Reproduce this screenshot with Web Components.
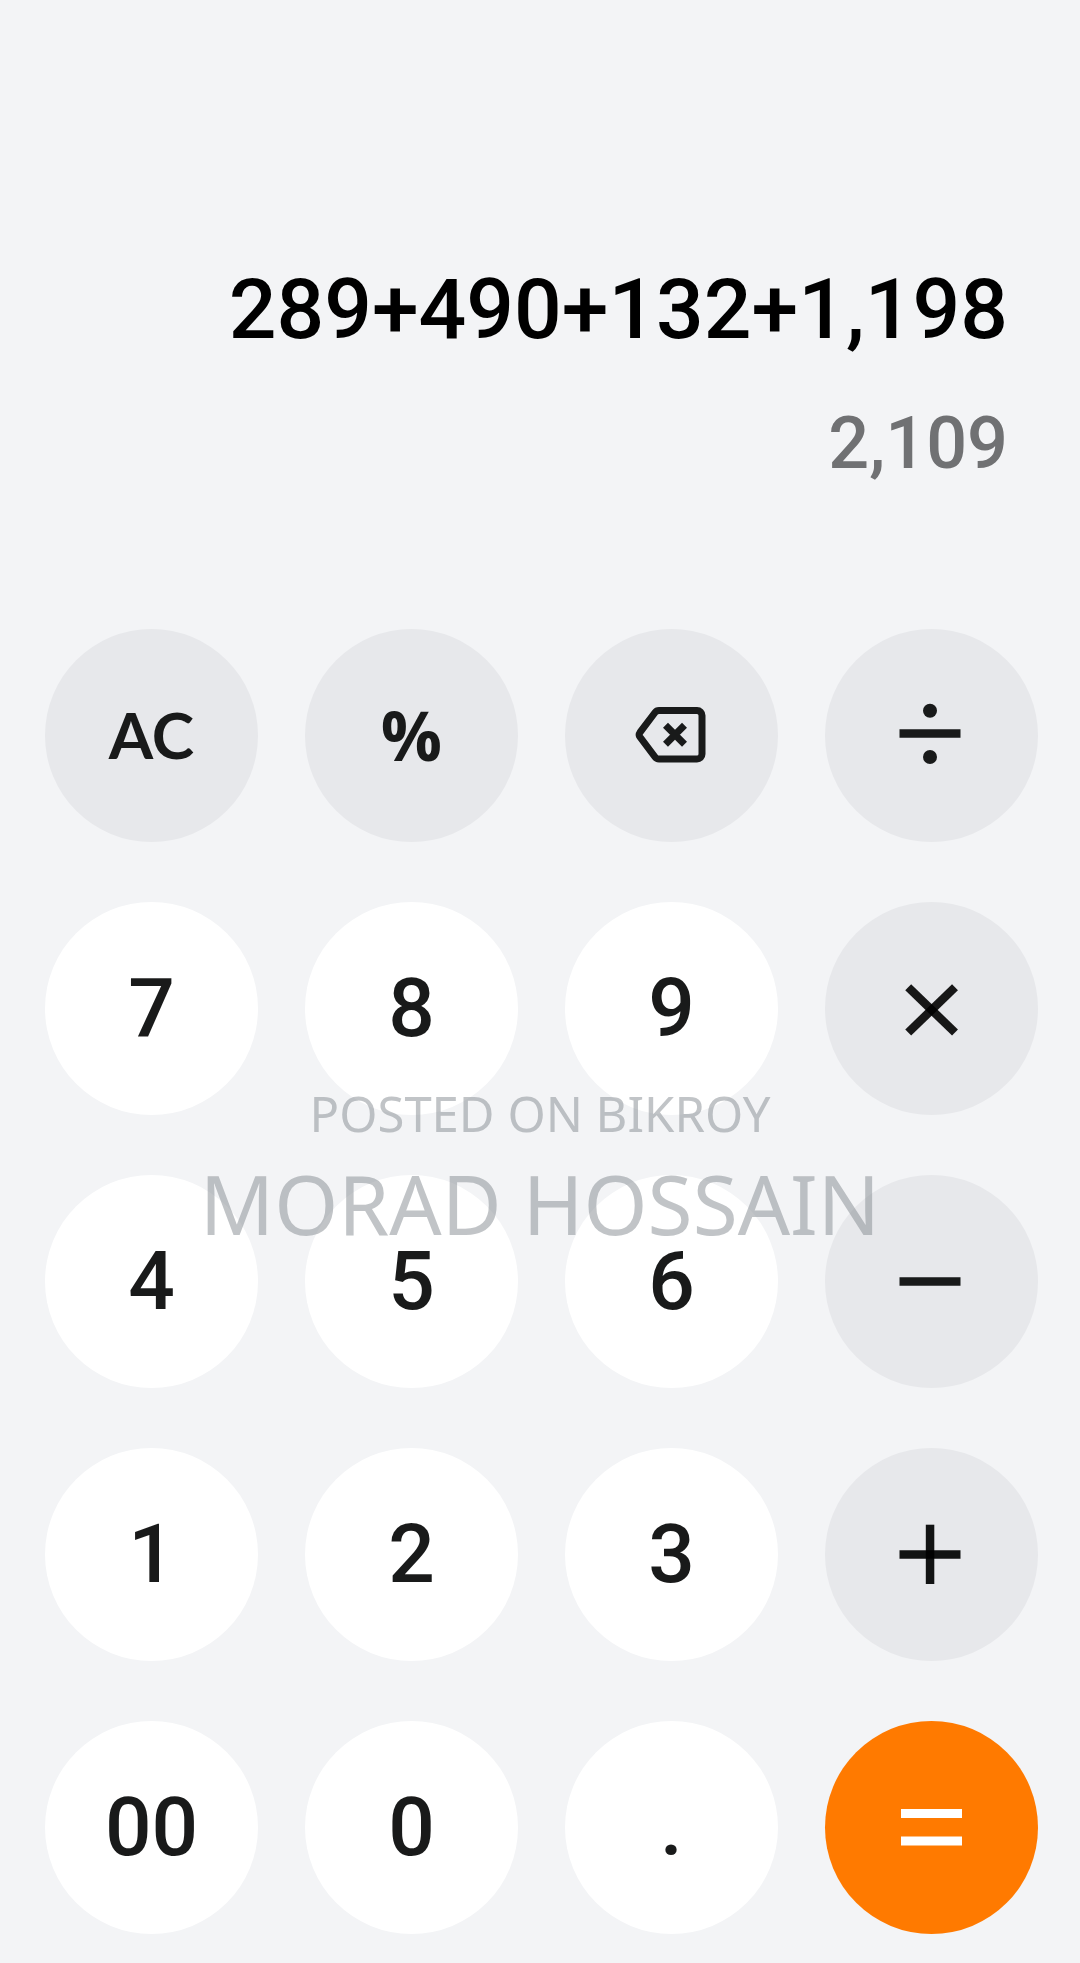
<!DOCTYPE html>
<html lang="en">
<head>
<meta charset="utf-8">
<meta name="viewport" content="width=device-width, initial-scale=1">
<title>Calculator</title>
<style>
body{
    margin: 0;
    background: #F3F4F6;
    font-family: Roboto, sans-serif;
}
</style>
</head>
<body>
<calc-app>
    <calc-display slot="display" data-expression="289+490+132+1,198" data-result="2,109"></calc-display>

    <calc-key data-kind="word">AC</calc-key>
    <calc-key data-kind="percent">%</calc-key>
    <calc-key data-icon="backspace" data-label="Backspace"></calc-key>
    <calc-key data-icon="divide" data-label="Divide"></calc-key>

    <calc-key>7</calc-key>
    <calc-key>8</calc-key>
    <calc-key>9</calc-key>
    <calc-key data-icon="multiply" data-label="Multiply"></calc-key>

    <calc-key>4</calc-key>
    <calc-key>5</calc-key>
    <calc-key>6</calc-key>
    <calc-key data-icon="minus" data-label="Minus"></calc-key>

    <calc-key>1</calc-key>
    <calc-key>2</calc-key>
    <calc-key>3</calc-key>
    <calc-key data-icon="plus" data-label="Plus"></calc-key>

    <calc-key>00</calc-key>
    <calc-key>0</calc-key>
    <calc-key>.</calc-key>
    <calc-key data-icon="equals" data-label="Equals"></calc-key>

    <post-mark slot="mark">
        <span slot="site">POSTED ON BIKROY</span>
        <span slot="owner">MORAD HOSSAIN</span>
    </post-mark>
</calc-app>

<script>
const makeTemplate = (html) => {
    const template = document.createElement("template");
    template.innerHTML = html;
    return template;
};

const appTemplate = makeTemplate(`
<style>
:host{
    display: block;
    position: relative;
}

.keys{
    display: grid;
    grid-template-columns: repeat(4, 1fr);
    column-gap: 47px;
    row-gap: 60px;
    padding: 0 42px 29px 45px;
}
</style>

<main>
    <slot name="display"></slot>
    <div class="keys"><slot></slot></div>
    <slot name="mark"></slot>
</main>
`);

const displayTemplate = makeTemplate(`
<style>
:host{
    display: flex;
    flex-direction: column;
    gap: 34px;
    padding: 260px 72px 135px;
    text-align: right;
    font-weight: 500;
    line-height: 100px;
}

output{
    display: block;
}

#expression{
    font-size: 84px;
    color: #000;
}

#result{
    font-size: 72px;
    color: #707173;
}
</style>

<output id="expression"></output>
<output id="result"></output>
`);

const keyTemplate = makeTemplate(`
<style>
:host{
    display: block;
    aspect-ratio: 1;
}

button{
    box-sizing: border-box;
    display: flex;
    align-items: center;
    justify-content: center;
    width: 100%;
    height: 100%;
    margin: 0;
    padding: 0 0 2px;
    border: 0;
    border-radius: 50%;
    background: #FFF;
    color: #191A1A;
    font: 500 82px/96px Roboto, sans-serif;
    cursor: pointer;
}

svg{
    display: block;
    width: 100%;
    height: 100%;
}

:host([data-kind]) button,
:host([data-icon]) button{
    background: #E7E8EB;
}

:host([data-icon]) button{
    padding: 0;
}

:host([data-kind="word"]) button{
    font: 700 64px/96px Lato, sans-serif;
}

:host([data-kind="percent"]) button{
    font: 700 68px/96px "Open Sans", sans-serif;
}

:host([data-icon="equals"]) button{
    background: #FF7A00;
    color: #FFF;
}
</style>

<button type="button"><slot></slot></button>
`);

const markTemplate = makeTemplate(`
<style>
:host{
    display: flex;
    flex-direction: column;
    align-items: center;
    position: absolute;
    top: 1079px;
    left: 0;
    right: 0;
    font-family: "Noto Sans", sans-serif;
    color: rgba(132, 138, 143, .5);
    white-space: nowrap;
    pointer-events: none;
}

.site{
    font-size: 49px;
    line-height: 68px;
}

.owner{
    font-size: 82px;
    line-height: 112px;
}
</style>

<div class="site"><slot name="site"></slot></div>
<div class="owner"><slot name="owner"></slot></div>
`);

//glyphs share the 213 unit box of a key
const icons = {
    backspace: `
        <g fill="none" stroke="currentColor" stroke-width="7">
            <path d="M94 81.5H132a5 5 0 0 1 5 5V125a5 5 0 0 1-5 5H94a5 5 0 0 1-4-2L75 108a4 4 0 0 1 0-4.6L90 83.5a5 5 0 0 1 4-2z"/>
            <path d="M100.5 96.3l19 19M119.5 96.3l-19 19"/>
        </g>`,
    divide: `
        <path d="M74.5 100.3h61v8.5h-61z"/>
        <circle cx="105" cy="81.7" r="7"/>
        <circle cx="105" cy="128" r="7"/>`,
    multiply: `
        <g stroke="#000" stroke-opacity=".9" stroke-width="8.5">
            <path d="M83.2 85.3L130 130.5"/>
            <path d="M130 85.3L83.2 130.5"/>
        </g>`,
    minus: `<path d="M74.5 102.2h61v8.5h-61z"/>`,
    plus: `
        <g fill="#000" fill-opacity=".92">
            <path d="M74.5 102.2h61v8.5h-61z"/>
            <path d="M100.8 76.7h8.5V136h-8.5z"/>
        </g>`,
    equals: `<path d="M76 88h61v9H76zM76 115.6h61v9H76z"/>`
};

class CalcApp extends HTMLElement{
    constructor(){
        super();
        this.attachShadow({mode: "open"});
        this.shadowRoot.appendChild(appTemplate.content.cloneNode(true));
    }
}

class CalcDisplay extends HTMLElement{
    constructor(){
        super();
        this.attachShadow({mode: "open"});
        this.shadowRoot.appendChild(displayTemplate.content.cloneNode(true));

        this.expression = this.shadowRoot.querySelector("#expression");
        this.result = this.shadowRoot.querySelector("#result");
    }

    connectedCallback(){
        this.render();
    }

    render(){
        this.expression.textContent = this.dataset.expression || "0";
        this.result.textContent = this.dataset.result || "";
    }
}

class CalcKey extends HTMLElement{
    constructor(){
        super();
        this.attachShadow({mode: "open"});
        this.shadowRoot.appendChild(keyTemplate.content.cloneNode(true));

        this.button = this.shadowRoot.querySelector("button");
    }

    connectedCallback(){
        this.render();
    }

    render(){
        const icon = icons[this.dataset.icon];
        //plain keys keep their slotted text
        if(!icon) return;

        this.button.setAttribute("aria-label", this.dataset.label);
        this.button.innerHTML = `<svg viewBox="0 0 213 213" fill="currentColor" aria-hidden="true">${icon}</svg>`;
    }
}

class PostMark extends HTMLElement{
    constructor(){
        super();
        this.attachShadow({mode: "open"});
        this.shadowRoot.appendChild(markTemplate.content.cloneNode(true));
    }
}

customElements.define("calc-app", CalcApp);
customElements.define("calc-display", CalcDisplay);
customElements.define("calc-key", CalcKey);
customElements.define("post-mark", PostMark);
</script>
</body>
</html>
